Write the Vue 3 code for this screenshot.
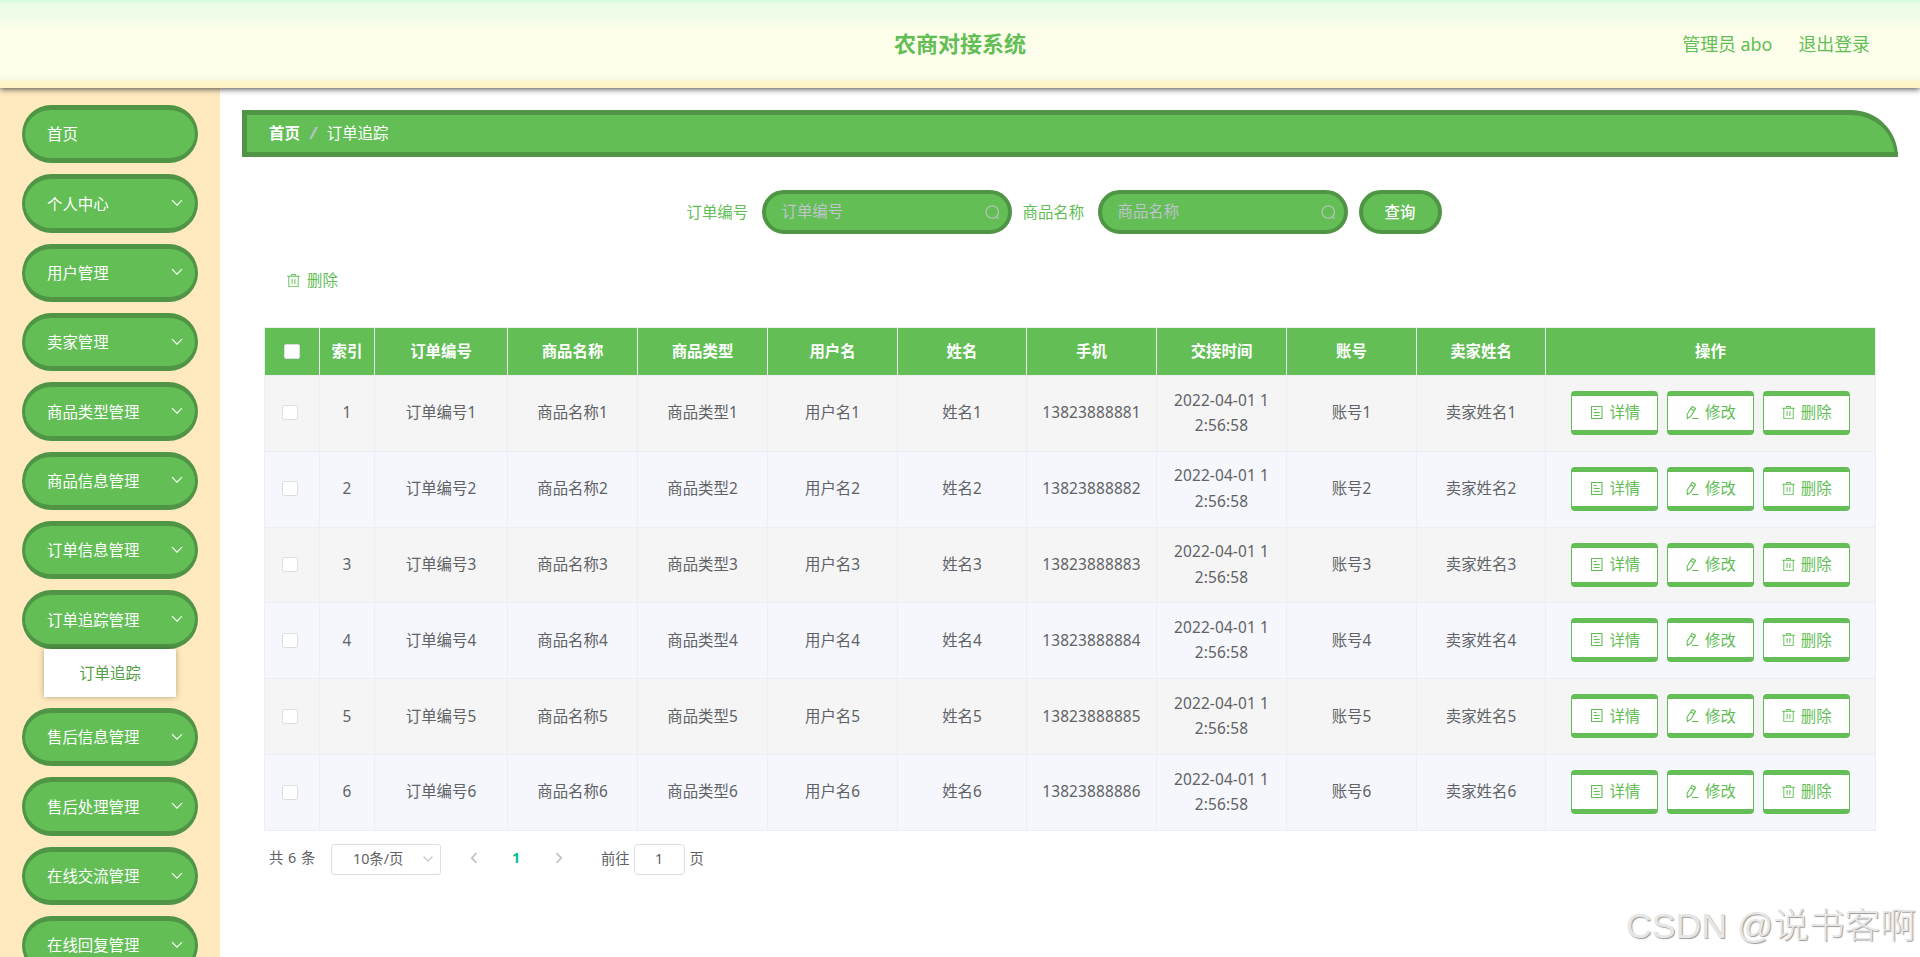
<script setup>
const menus = [
  { name: '首页', leaf: true },
  { name: '个人中心' },
  { name: '用户管理' },
  { name: '卖家管理' },
  { name: '商品类型管理' },
  { name: '商品信息管理' },
  { name: '订单信息管理' },
  { name: '订单追踪管理', child: '订单追踪' },
  { name: '售后信息管理' },
  { name: '售后处理管理' },
  { name: '在线交流管理' },
  { name: '在线回复管理' },
]
const heads = ['索引', '订单编号', '商品名称', '商品类型', '用户名', '姓名', '手机', '交接时间', '账号', '卖家姓名', '操作']
const filters = ['订单编号', '商品名称']
const rows = [1, 2, 3, 4, 5, 6]
const trash = 'M160 256H96a32 32 0 0 1 0-64h256V96a32 32 0 0 1 32-32h256a32 32 0 0 1 32 32v96h256a32 32 0 1 1 0 64h-64v672a32 32 0 0 1-32 32H192a32 32 0 0 1-32-32V256zm448-64v-64H416v64h192zM224 896h576V256H224v640zm192-128a32 32 0 0 1-32-32V416a32 32 0 0 1 64 0v320a32 32 0 0 1-32 32zm192 0a32 32 0 0 1-32-32V416a32 32 0 0 1 64 0v320a32 32 0 0 1-32 32z'
</script>

<template>
  <div class="page">
    <header class="top">
      <span></span>
      <h1>农商对接系统</h1>
      <div class="user"><span>管理员 abo</span><span>退出登录</span></div>
    </header>
    <div class="body">
      <aside>
        <div v-for="m in menus" :key="m.name" class="group">
          <div class="menu">
            <span>{{ m.name }}</span>
            <svg v-if="!m.leaf" width="12" height="12" viewBox="0 0 12 12"><path d="M1 3.2l5 5 5-5" /></svg>
          </div>
          <div v-if="m.child" class="sub">{{ m.child }}</div>
        </div>
      </aside>
      <main>
        <nav class="crumb"><b>首页</b><i>/</i><span>订单追踪</span></nav>
        <div class="search">
          <template v-for="f in filters" :key="f">
            <label>{{ f }}</label>
            <div class="field">
              <span>{{ f }}</span>
              <svg width="15" height="15" viewBox="0 0 15 15"><circle cx="7.200" cy="7" r="6.200" /><path d="M11.4 11.400l2.400 2.400" /></svg>
            </div>
          </template>
          <button class="query">查询</button>
        </div>
        <div class="tools">
          <svg class="solid" width="15" height="15" viewBox="0 0 1024 1024"><path :d="trash" /></svg>删除
        </div>
        <table>
          <colgroup>
            <col class="narrow" /><col class="narrow" /><col class="order" />
            <col class="mid" span="2" /><col class="mid" /><col class="mid-s" /><col class="mid" span="3" /><col class="mid-s" />
            <col class="ops" />
          </colgroup>
          <thead>
            <tr>
              <th><span class="check head"></span></th>
              <th v-for="h in heads" :key="h">{{ h }}</th>
            </tr>
          </thead>
          <tbody>
            <tr v-for="n in rows" :key="n">
              <td><span class="check"></span></td>
              <td>{{ n }}</td>
              <td>订单编号{{ n }}</td>
              <td>商品名称{{ n }}</td>
              <td>商品类型{{ n }}</td>
              <td>用户名{{ n }}</td>
              <td>姓名{{ n }}</td>
              <td class="latin">1382388888{{ n }}</td>
              <td class="latin">2022-04-01 1<br />2:56:58</td>
              <td>账号{{ n }}</td>
              <td>卖家姓名{{ n }}</td>
              <td>
                <div class="acts">
                  <button>
                    <svg width="15" height="15" viewBox="0 0 15 15"><path d="M2.500 1.500h10.500v12h-10.500zM4.700 4.500h3M4.700 7.500h6M4.700 10.500h6" /></svg>详情
                  </button>
                  <button>
                    <svg width="15" height="15" viewBox="0 0 15 15"><path d="M7.200 1.500l3.400 1.900-4.700 7.700-3.500 2.400-.4-4.200zM5.800 3.900l3.400 1.900M7 13.500h6.500" /></svg>修改
                  </button>
                  <button>
                    <svg class="solid" width="15" height="15" viewBox="0 0 1024 1024"><path :d="trash" /></svg>删除
                  </button>
                </div>
              </td>
            </tr>
          </tbody>
        </table>
        <div class="pager">
          <span class="total">共 6 条</span>
          <div class="size">
            <span>10条/页</span>
            <svg width="12" height="12" viewBox="0 0 12 12"><path d="M1.500 3.500l4.500 4.500 4.500-4.500" /></svg>
          </div>
          <svg class="arrow" width="12" height="12" viewBox="0 0 12 12"><path d="M8.500 1.200l-4.800 4.800 4.800 4.800" /></svg>
          <b>1</b>
          <svg class="arrow" width="12" height="12" viewBox="0 0 12 12"><path d="M3.500 1.200l4.800 4.800-4.800 4.800" /></svg>
          <span class="goto">前往</span>
          <span class="num">1</span>
          <span>页</span>
        </div>
      </main>
    </div>
    <div class="mark">CSDN @说书客啊</div>
  </div>
</template>

<style>
body { margin: 0; overflow: hidden; }
</style>

<style scoped>
* { box-sizing: border-box; }
.page { position: relative; height: 957px; overflow: hidden; background: #fff; font: 15.4px/20px "Noto Sans", "Noto Sans CJK SC", sans-serif; color: #606266; }
svg { flex: none; fill: none; stroke: currentColor; stroke-width: 1.1; }
svg.solid { fill: currentColor; stroke: none; }
button { font: inherit; margin: 0; padding: 0; }
.top { position: relative; z-index: 2; height: 88px; padding-right: 50px; display: grid; grid-template-columns: 1fr auto 1fr; align-items: center; color: #62be55; background: linear-gradient(#d5fcdc 0, #d5fcdc 2px, #ebfde6 3px, #eefde8 14px, #fcfeea 30px, #fefeec 72px, #f7fae6 80px, #fdf4c8 81px, #fef3c4 88px); box-shadow: 0 1px 6px #444; }
h1 { margin: 0 -50px 2px 0; font-size: 22px; line-height: 30px; }
.user { justify-self: end; display: flex; gap: 26px; font-size: 17.9px; line-height: 26px; }
.body { display: flex; height: 869px; }
aside { flex: none; width: 220px; padding: 17px 22px 0; background: #ffeabf; }
.group { margin-bottom: 11px; }
.menu { height: 58.35px; border: solid #4f9545; border-width: 5px 3px; border-radius: 30px; background: #62be55; color: #fff; display: flex; align-items: center; justify-content: space-between; padding: 2px 12px 0 22px; }
.menu svg { margin-top: -3px; }
.sub { position: relative; margin: 0 22px; height: 48.4px; line-height: 50px; text-align: center; background: #fff; color: #53a047; box-shadow: 0 0 6px rgba(0, 0, 0, .3); }
main { flex: 1; padding: 22px 22px 0; }
.crumb { height: 47px; border: 5px solid #4f9545; border-right-width: 3px; border-radius: 0 47px 0 0; background: #62be55; color: #fff; display: flex; align-items: center; padding-left: 22px; }
.crumb i { margin: 0 9px; width: 9px; text-align: center; color: #c0c4cc; font-weight: 700; }
.search { display: flex; align-items: center; margin: 33px 0 0 444.5px; color: #62be55; }
.search label { width: 62px; padding-top: 1px; }
.field { width: 250px; height: 44px; border: 4px solid #4f9545; border-radius: 22px; background: #62be55; color: #c0c4cc; margin: 0 11px 0 13px; padding: 0 8px 0 16px; display: flex; align-items: center; justify-content: space-between; }
.query { width: 83px; height: 44px; padding-top: 1px; border: 4px solid #4f9545; border-radius: 22px; background: #62be55; color: #fff; font-weight: 500; }
.tools { margin: 37px 0 36px 44px; display: flex; align-items: center; gap: 6px; color: #62be55; }
.tools svg { margin-top: -1px; }
table { table-layout: fixed; border-collapse: separate; border-spacing: 0; width: 1612px; margin-left: 22px; border: solid #ebeef5; border-width: 1px 0 0 1px; }
.narrow { width: 55px; }
.order { width: 133px; }
.mid { width: 130px; }
.mid-s { width: 129px; }
.ops { width: 330px; }
th, td { padding: 0; text-align: center; border: solid #ebeef5; border-width: 0 1px 1px 0; }
th { height: 48px; background: #62be55; color: #fff; }
td { height: 75.83px; padding-bottom: 1px; line-height: 25.4px; background: #f5f5f5; }
tr:nth-child(even) td { background: #f5f7fc; }
.latin { letter-spacing: .15px; }
.check { display: block; width: 16px; height: 15px; margin: 0 auto 0 17px; border: 1px solid #dcdfe6; border-radius: 2px; background: #fff; }
.check.head { margin-left: 19px; }
.acts { display: flex; justify-content: center; gap: 9px; }
.acts button { width: 86.7px; height: 44px; border: solid #62be55; border-width: 5px 1px; border-radius: 4px; background: #fff; color: #62be55; display: flex; align-items: center; justify-content: center; gap: 5px; }
.acts svg { margin-top: -1px; }
.pager { display: flex; align-items: center; height: 31px; margin: 13px 0 0 27px; font-size: 14.3px; }
.total { width: 62px; padding-bottom: 2px; word-spacing: 1px; }
.size { width: 110px; height: 31px; border: 1px solid #dcdfe6; border-radius: 3px; display: flex; align-items: center; justify-content: space-between; padding: 0 6px 0 21px; }
.size svg, .arrow { color: #c0c4cc; }
.arrow { stroke-width: 1.8; margin: 0 0 2px 27px; }
.pager b { margin-left: 32px; width: 9px; padding-bottom: 3px; color: #00c292; }
.arrow ~ .arrow { margin-left: 32px; }
.goto { margin: 0 4px 0 36px; }
.num { width: 51px; height: 31px; line-height: 27px; border: 1px solid #dcdfe6; border-radius: 4px; text-align: center; margin-right: 5px; }
.mark { position: absolute; z-index: 3; right: 4px; bottom: 6px; font: 300 35.7px/50px "Liberation Sans", "Noto Sans CJK SC", sans-serif; color: #e6e6e6; text-shadow: 1px 1px 1px #999; white-space: nowrap; }
</style>
